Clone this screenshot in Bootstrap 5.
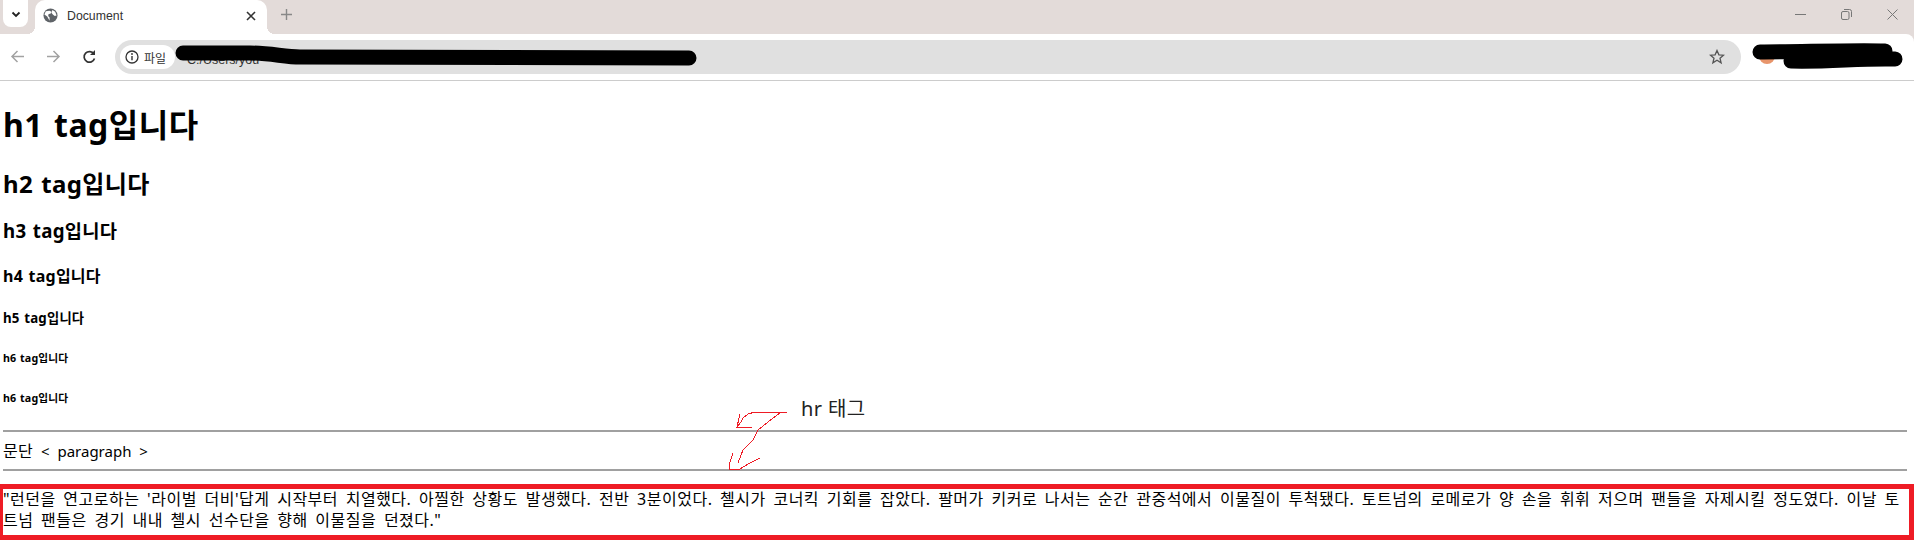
<!DOCTYPE html>
<html lang="ko">
<head>
<meta charset="utf-8">
<title>Document</title>
<link href="https://cdn.jsdelivr.net/npm/bootstrap@5.3.0/dist/css/bootstrap.min.css" rel="stylesheet">
<style>
html,body{height:544px;overflow:hidden;background:#fff}
body{font-family:"Noto Sans","Noto Sans CJK KR",sans-serif;color:#000;position:relative}
.chrome-top{background:#e3dbd9}
.tabstrip{height:34px;padding-left:3px}
.tablist-btn{width:25px;height:27px;background:#fff;border-radius:0 0 8px 8px}
.tab-active{position:relative;width:232px;height:34px;margin-left:7px;background:#fff;border-radius:10px 10px 0 0;padding:0 11px 3px 8px;font:12.3px "Liberation Sans",sans-serif;color:#333}
.tab-active::before,.tab-active::after{content:"";position:absolute;bottom:0;width:8px;height:8px}
.tab-active::before{left:-8px;background:radial-gradient(circle at 0 0,transparent 8px,#fff 8px)}
.tab-active::after{right:-8px;background:radial-gradient(circle at 100% 0,transparent 8px,#fff 8px)}
.tab-active span{margin-left:9px}
.tab-new{margin-left:14px;margin-top:-3px}
.win-btns{gap:35px;padding-right:16px;margin-top:-3px}
.toolbar{height:47px;padding:6px 0 0 10px;border-bottom:1px solid #ccc;background:#fff;border-top-right-radius:8px}
.nav-icons{gap:21px;width:95px;padding-top:9px}
.omnibox{width:1626px;height:34px;background:#e0e0e0;border-radius:17px;padding:0 16px 0 5px;margin-left:10px}
.chip{height:24px;width:55px;background:#fff;border-radius:12px;padding-left:5px;font:12px "Noto Sans CJK KR",sans-serif;color:#333;gap:5px;flex:none}
.url-text{font:12.500px "Liberation Sans",sans-serif;color:#333;margin-left:12px;padding-top:5px}
.doc{padding:0 7px 0 3px}
.doc h1,.doc h2,.doc h3,.doc h4,.doc h5,.doc h6{font-weight:700;margin:0;line-height:1;display:flex;align-items:center;letter-spacing:.015em;word-spacing:.07em;white-space:pre}
.doc h1{font-size:32px;height:37px;margin-top:25px}
.doc h2{font-size:24px;height:28px;margin-top:27px}
.doc h3{font-size:18.700px;height:22px;margin-top:22px}
.doc h4{font-size:16px;height:18px;margin-top:25px}
.doc h5{font-size:13.300px;height:16px;margin-top:26px}
.doc h6{font-size:10.700px;height:13px;margin-top:25px}
.doc h6+h6{margin-top:27px}
.rule{margin:0;border:0;border-top:2px solid #a0a0a0;opacity:1}
.rule-top{margin-top:25px}
.para{line-height:21px;margin:9px 0 7px;height:21px;font-size:15px;word-spacing:4px}
.para-ko{font-size:16px;letter-spacing:.3px}
.redbox{position:absolute;left:0;right:0;top:484px;height:56px;border:solid #ee1c25;border-width:5px 5px 5px 3px;padding:0;font-size:16px;line-height:21px;margin:0;letter-spacing:.5px;word-spacing:3px;overflow:hidden}
.hr-label{position:absolute;left:801px;top:396px;font-size:20px;line-height:26px;color:#222;letter-spacing:.4px}
.overlay{position:absolute;left:0;top:0;pointer-events:none}
</style>
</head>
<body>
<header class="chrome-top">
<div class="tabstrip d-flex align-items-start">
  <div class="tablist-btn d-flex align-items-center justify-content-center">
    <svg width="12" height="12" viewBox="0 0 12 12"><path d="M2.500 4.500 6 8l3.500-3.500" fill="none" stroke="#222" stroke-width="1.800"/></svg>
  </div>
  <div class="tab-active d-flex align-items-center">
    <svg width="15" height="15" viewBox="0 0 16 16"><circle cx="8" cy="8" r="7.500" fill="#5f6368"/><path d="M3 3.500 7 3l2 1-1 2-2 .5-.5 2L7 10v3.500L4.500 9 1.500 7zM10 2l3 2 1.500 4-2 .5L10.500 7 9 5z" fill="#fff"/></svg>
    <span>Document</span>
    <svg class="ms-auto" width="10" height="10" viewBox="0 0 10 10"><path d="M1 1l8 8M9 1 1 9" stroke="#333" stroke-width="1.600"/></svg>
  </div>
  <div class="tab-new d-flex align-items-center h-100">
    <svg width="11" height="11" viewBox="0 0 11 11"><path d="M5.500 0v11M0 5.500h11" stroke="#888" stroke-width="1.400"/></svg>
  </div>
  <div class="win-btns d-flex align-items-center h-100 ms-auto">
    <svg width="11" height="11" viewBox="0 0 11 11"><path d="M0 5.500h11" stroke="#777"/></svg>
    <svg width="11" height="11" viewBox="0 0 11 11"><rect x=".5" y="2.500" width="7.500" height="8" rx="1.500" fill="none" stroke="#777"/><path d="M3 .5h5.500a2 2 0 0 1 2 2V8" fill="none" stroke="#777"/></svg>
    <svg width="11" height="11" viewBox="0 0 11 11"><path d="M.5.5l10 10M10.500.5l-10 10" stroke="#777"/></svg>
  </div>
</div>
<div class="toolbar d-flex align-items-start">
  <div class="nav-icons d-flex align-items-center">
    <svg width="15" height="15" viewBox="0 0 15 15"><path d="M14 7.500H2M7.500 2 2 7.500 7.500 13" fill="none" stroke="#a2a2a2" stroke-width="1.500"/></svg>
    <svg width="15" height="15" viewBox="0 0 15 15"><path d="M1 7.500h12M7.500 2 13 7.500 7.500 13" fill="none" stroke="#a2a2a2" stroke-width="1.500"/></svg>
    <svg width="15" height="15" viewBox="0 0 15 15"><path d="M12.500 9.500a5.300 5.300 0 1 1-.6-4.500" fill="none" stroke="#333" stroke-width="1.700"/><path d="M13 1v5H8z" fill="#333"/></svg>
  </div>
  <div class="omnibox d-flex align-items-center">
    <div class="chip d-flex align-items-center">
      <svg width="14" height="14" viewBox="0 0 14 14"><circle cx="7" cy="7" r="6" fill="none" stroke="#333" stroke-width="1.300"/><path d="M7 6v4.200" stroke="#333" stroke-width="1.400"/><circle cx="7" cy="4" r=".9" fill="#333"/></svg>
      <span>파일</span>
    </div>
    <span class="url-text">C:/Users/you</span>
    <svg class="ms-auto" width="16" height="16" viewBox="0 0 16 16"><path d="M8 1.500l1.900 4.300 4.600.4-3.500 3 1.100 4.600L8 11.300l-4.100 2.500L5 9.200l-3.500-3 4.600-.4z" fill="none" stroke="#555" stroke-width="1.300"/></svg>
  </div>
</div>
</header>
<main class="doc">
  <h1>h1 tag입니다</h1>
  <h2>h2 tag입니다</h2>
  <h3>h3 tag입니다</h3>
  <h4>h4 tag입니다</h4>
  <h5>h5 tag입니다</h5>
  <h6>h6 tag입니다</h6>
  <h6>h6 tag입니다</h6>
  <hr class="rule rule-top">
  <p class="para"><span class="para-ko">문단</span> &lt; paragraph &gt;</p>
  <hr class="rule">
</main>
<p class="redbox">"런던을 연고로하는 '라이벌 더비'답게 시작부터 치열했다. 아찔한 상황도 발생했다. 전반 3분이었다. 첼시가 코너킥 기회를 잡았다. 팔머가 키커로 나서는 순간 관중석에서 이물질이 투척됐다. 토트넘의 로메로가 양 손을 휘휘 저으며 팬들을 자제시킬 정도였다. 이날 토트넘 팬들은 경기 내내 첼시 선수단을 향해 이물질을 던졌다."</p>
<div class="hr-label">hr 태그</div>
<svg class="overlay" width="1914" height="544" viewBox="0 0 1914 544">
  <circle cx="1767" cy="56" r="8" fill="#e8956b"/>
  <g fill="none" stroke="#000" stroke-linecap="round" stroke-linejoin="round">
    <path d="M183 53L250 53C270 53 285 57 300 57L689 58" stroke-width="15"/>
    <path d="M1760 52C1800 52 1850 50 1885 51" stroke-width="15"/>
    <path d="M1791 61C1830 62 1860 58 1895 59" stroke-width="15"/>
  </g>
  <path shape-rendering="crispEdges" fill="none" stroke="#ee1c25" stroke-width="1" d="M787 412H755L748 414 743 418 741 422 737 427H752M737 427 740 414M780 413 768 422 758 430 753 440 743 450 738 463M729 469 730 462 733 453M729 469H740L750 463 760 458"/>
</svg>
</body>
</html>
